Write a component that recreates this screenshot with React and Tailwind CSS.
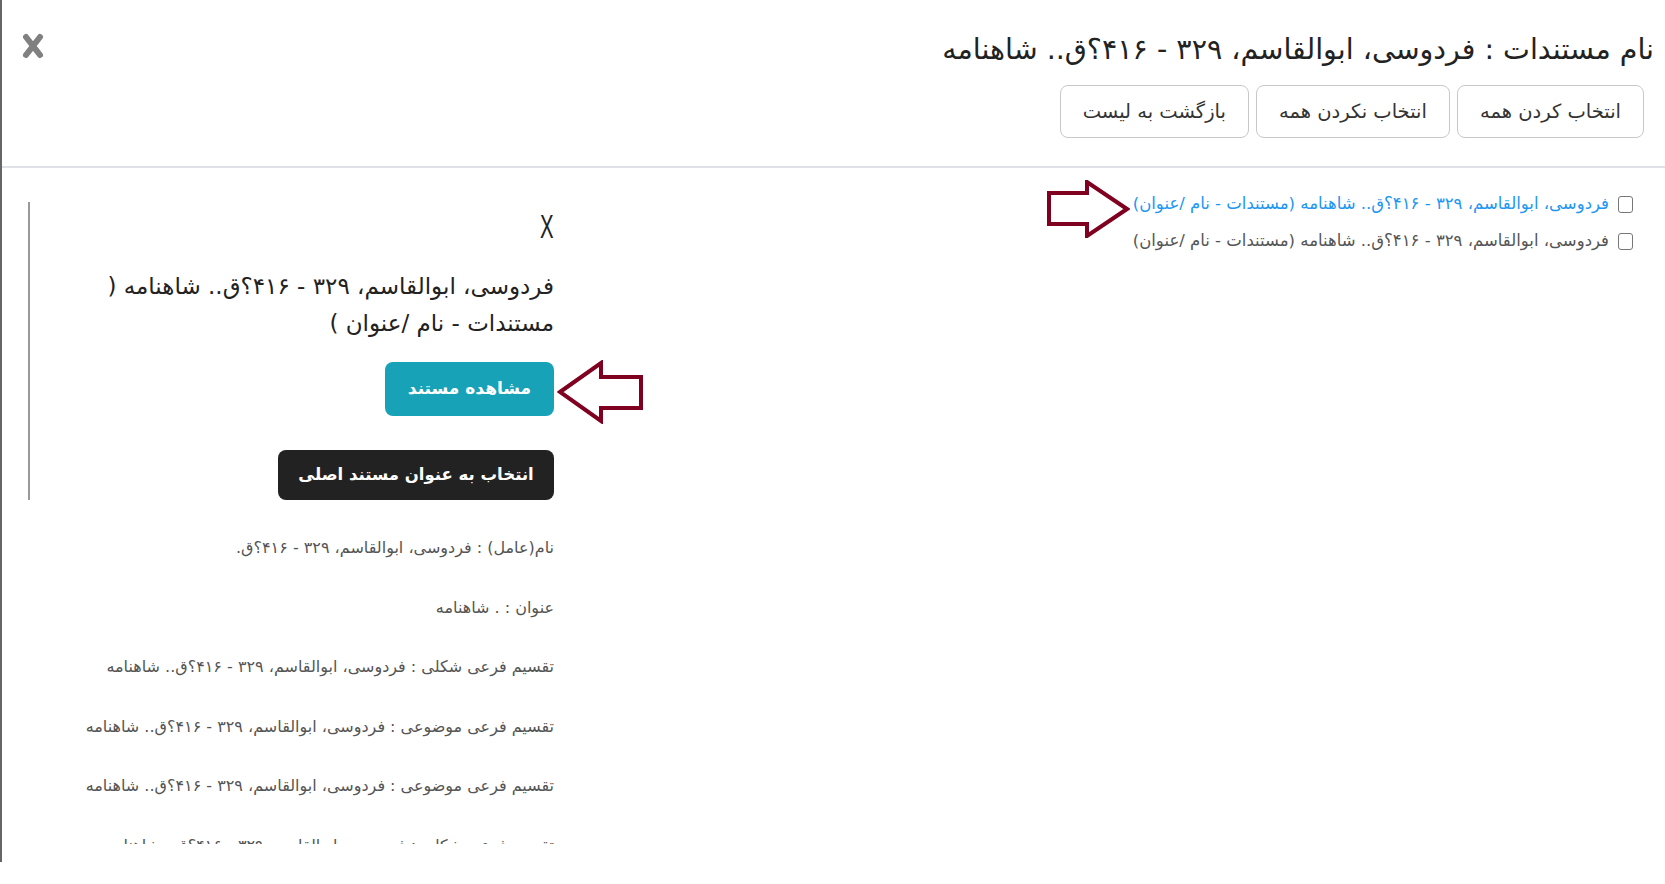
import React from 'react';

const NAME = 'فردوسی، ابوالقاسم، ۳۲۹ - ۴۱۶؟ق.. شاهنامه';

const details = [
  'نام(عامل) : فردوسی، ابوالقاسم، ۳۲۹ - ۴۱۶؟ق.',
  'عنوان : . شاهنامه',
  'تقسیم فرعی شکلی : ' + NAME,
  'تقسیم فرعی موضوعی : ' + NAME,
  'تقسیم فرعی موضوعی : ' + NAME,
  'تقسیم فرعی شکلی : ' + NAME,
];

const RightArrow = () => (
  <svg width="83" height="58" viewBox="0 0 83 58" fill="none">
    <polygon
      points="2,13 40,13 40,2 80,29 40,56 40,44 2,44"
      stroke="#800020"
      strokeWidth="4"
      strokeLinejoin="miter"
    />
  </svg>
);

const LeftArrow = () => (
  <svg width="86" height="64" viewBox="0 0 86 64" fill="none">
    <polygon
      points="3,32 44,3 44,17 84,17 84,48 44,48 44,61"
      stroke="#800020"
      strokeWidth="4"
      strokeLinejoin="miter"
    />
  </svg>
);

const App = () => {
  return (
    <div
      dir="rtl"
      className="relative w-full h-screen bg-white overflow-hidden font-['DejaVu_Sans',sans-serif] text-[#212529]"
    >
      <div className="h-[862px] border-l-2 border-[#666] flex flex-col">
        {/* header */}
        <div className="h-[168px] shrink-0 border-b-2 border-[#dee2e6] flex justify-between items-start">
          <div className="pr-[11px] pt-[29px] flex flex-col items-start">
            <h1 className="text-[28.5px] leading-[42px] text-[#222] whitespace-nowrap">
              نام مستندات : {NAME}
            </h1>
            <div className="mt-[14px] mr-[10px] flex gap-[7px]">
              {['انتخاب کردن همه', 'انتخاب نکردن همه', 'بازگشت به لیست'].map((t) => (
                <button
                  key={t}
                  className="h-[53px] px-[22px] rounded-lg border border-[#c8c8c8] bg-white text-[19.5px] text-[#333]"
                >
                  {t}
                </button>
              ))}
            </div>
          </div>
          <button className="ml-[20px] mt-[32px] text-[#808080]">
            <svg width="22" height="28" viewBox="0 0 22 28">
              <path
                d="M4 5 L18 23 M18 5 L4 23"
                stroke="currentColor"
                strokeWidth="6"
                strokeLinecap="round"
              />
            </svg>
          </button>
        </div>

        {/* body */}
        <div className="flex-1 flex justify-between">
          <div className="pr-[32px] pt-[18px] flex flex-col">
            {[true, false].map((active, i) => (
              <label key={i} className="h-[37px] flex items-center gap-[9px]">
                <span className="w-[15px] h-[17px] rounded-[3px] border-[1.5px] border-[#777] bg-white" />
                <span
                  className={`text-[16.5px] whitespace-nowrap ${
                    active ? 'text-[#2196f3]' : 'text-[#555]'
                  }`}
                >
                  {NAME} (مستندات - نام /عنوان)
                </span>
              </label>
            ))}
          </div>

          <div className="w-[526px] ml-[26px] pt-[34px] h-[676px] overflow-hidden">
            <div className="border-l-2 border-[#999] flex flex-col items-start">
              <div className="mt-[6px] text-[34px] leading-[36px] font-light text-[#222] scale-x-[0.6] origin-right font-['Liberation_Sans',sans-serif]">
                X
              </div>
              <h2 className="mt-[24px] text-[23px] leading-[37px] text-[#222]">
                {NAME} (
                <br />
                مستندات - نام /عنوان )
              </h2>
              <button className="mt-[20px] h-[54px] w-[169px] rounded-lg bg-[#17a2b8] text-white font-bold text-[17px]">
                مشاهده مستند
              </button>
              <button className="mt-[34px] h-[50px] w-[276px] rounded-lg bg-[#222] text-white font-bold text-[16.5px]">
                انتخاب به عنوان مستند اصلی
              </button>
            </div>
            <div className="mt-[36px] flex flex-col gap-[35.5px]">
              {details.map((d, i) => (
                <p key={i} className="text-[16px] leading-6 text-[#555] whitespace-nowrap">
                  {d}
                </p>
              ))}
            </div>
          </div>
        </div>
      </div>

      {/* annotation arrows */}
      <div className="absolute left-[1047px] top-[180px]">
        <RightArrow />
      </div>
      <div className="absolute left-[557px] top-[360px]">
        <LeftArrow />
      </div>
    </div>
  );
};

export default App;
